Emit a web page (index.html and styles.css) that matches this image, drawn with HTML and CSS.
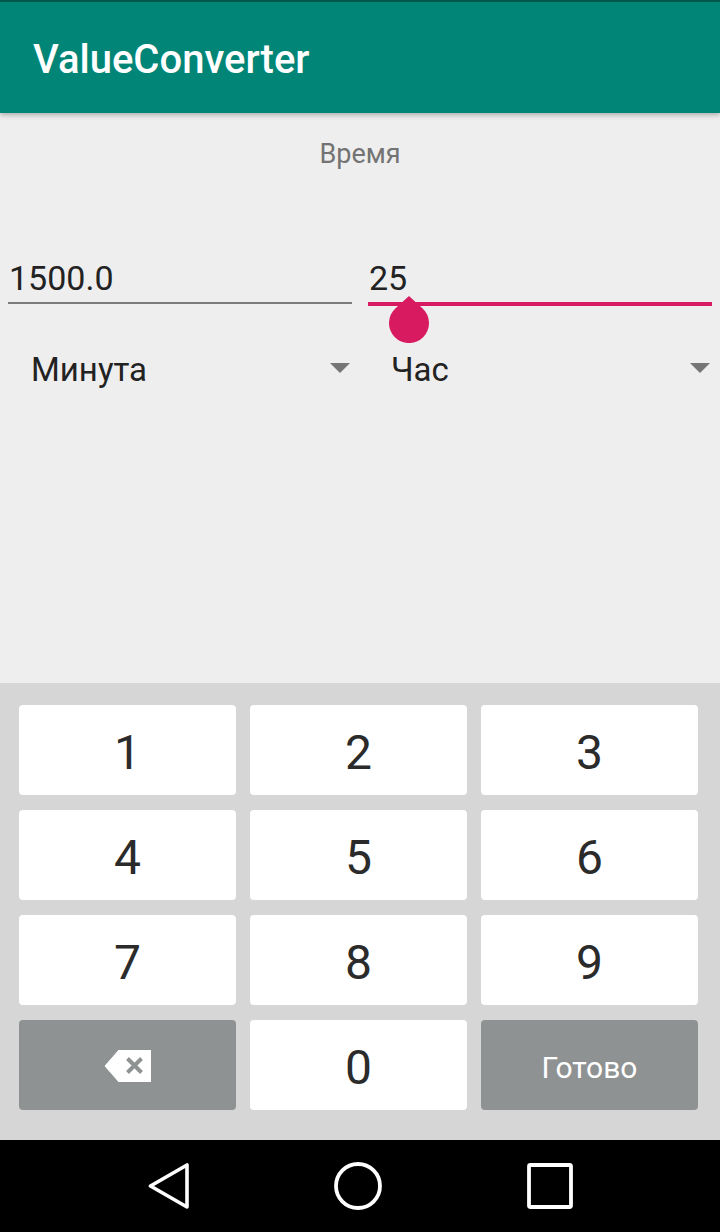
FILE: index.html
```html
<!DOCTYPE html>
<html lang="ru">
<head>
<meta charset="utf-8">
<title>ValueConverter</title>
<link rel="stylesheet" href="styles.css">
</head>
<body>
<div class="screen">
  <header class="appbar">
    <h1 class="title">ValueConverter</h1>
  </header>

  <main class="content">
    <div class="label">Время</div>
    <div class="fields">
      <div class="edit">1500.0</div>
      <div class="edit active">25
        <svg class="handle" width="40" height="47" viewBox="0 0 40 47">
          <path d="M20 0 L33.4 12.2 A20 20 0 1 1 6.6 12.2 Z" fill="#D81B60"/>
        </svg>
      </div>
    </div>
    <div class="spinners">
      <div class="spinner"><span>Минута</span><i class="arrow"></i></div>
      <div class="spinner"><span>Час</span><i class="arrow"></i></div>
    </div>
  </main>

  <section class="keyboard">
    <div class="key">1</div>
    <div class="key">2</div>
    <div class="key">3</div>
    <div class="key">4</div>
    <div class="key">5</div>
    <div class="key">6</div>
    <div class="key">7</div>
    <div class="key">8</div>
    <div class="key">9</div>
    <div class="key dark">
      <svg width="47" height="32" viewBox="0 0 47 32">
        <path d="M1 16 L15 0 H47 V32 H15 Z" fill="#fff" stroke="#fff" stroke-width="1" stroke-linejoin="round"/>
        <path d="M23.5 8.5 L37.5 22.5 M37.5 8.5 L23.5 22.5" stroke="#8f9293" stroke-width="4" stroke-linecap="butt"/>
      </svg>
    </div>
    <div class="key">0</div>
    <div class="key dark done">Готово</div>
  </section>

  <nav class="navbar">
    <svg width="41" height="46" viewBox="0 0 41 46">
      <path d="M39 2 V44 L2.5 23 Z" fill="none" stroke="#fff" stroke-width="3.6" stroke-linejoin="round"/>
    </svg>
    <svg width="48" height="48" viewBox="0 0 48 48">
      <circle cx="24" cy="24" r="22" fill="none" stroke="#fff" stroke-width="3.8"/>
    </svg>
    <svg width="46" height="46" viewBox="0 0 46 46">
      <rect x="2" y="2" width="42" height="42" rx="1.5" fill="none" stroke="#fff" stroke-width="3.8"/>
    </svg>
  </nav>
</div>
</body>
</html>
```

FILE: styles.css
```css
* { box-sizing: border-box; }

html, body {
  margin: 0;
  padding: 0;
  background: #eeeeee;
}

.screen {
  width: 720px;
  height: 1232px;
  display: flex;
  flex-direction: column;
  font-family: Roboto, "Noto Sans", sans-serif;
  overflow: hidden;
}

.appbar {
  height: 113px;
  flex: none;
  background: #008577;
  border-top: 2px solid #00574B;
  box-shadow: 0 2px 5px rgba(0, 0, 0, 0.28);
  position: relative;
  z-index: 1;
  padding: 34px 0 0 33px;
}

.title {
  margin: 0;
  font-size: 40px;
  font-weight: 500;
  line-height: 48px;
  color: #ffffff;
}

.content {
  flex: 1;
  background: #eeeeee;
  padding: 25px 8px 0 8px;
}

.label {
  font-size: 27px;
  line-height: 32px;
  color: #737373;
  text-align: center;
}

.fields {
  display: flex;
  align-items: flex-start;
  gap: 16px;
  margin-top: 88px;
}

.edit {
  flex: 1;
  position: relative;
  font-size: 34px;
  line-height: 40px;
  color: #222222;
  padding: 0 0 4px 1px;
  border-bottom: 2px solid #7b7b7b;
}

.edit.active {
  border-bottom: 4px solid #D81B60;
}

.handle {
  position: absolute;
  left: 21px;
  bottom: -41px;
}

.spinners {
  display: flex;
  gap: 16px;
  margin-top: 44px;
}

.spinner {
  flex: 1;
  display: flex;
  align-items: center;
  justify-content: space-between;
  padding: 0 2px 0 23px;
  font-size: 33px;
  line-height: 40px;
  color: #222222;
}

.arrow {
  display: block;
  width: 0;
  height: 0;
  margin-top: -4px;
  border-left: 10px solid transparent;
  border-right: 10px solid transparent;
  border-top: 10px solid #757575;
}

.keyboard {
  flex: none;
  height: 457px;
  background: #d6d6d6;
  padding: 22px 22px 0 19px;
  display: grid;
  grid-template-columns: repeat(3, 217px);
  grid-auto-rows: 90px;
  column-gap: 14px;
  row-gap: 15px;
}

.key {
  background: #ffffff;
  border-radius: 4px;
  display: flex;
  align-items: center;
  justify-content: center;
  padding-top: 4px;
  font-size: 48px;
  color: #2b2b2b;
}

.key.dark {
  background: #8f9293;
  padding-top: 2px;
}

.key.done {
  font-size: 30px;
  color: #ffffff;
  padding-top: 4px;
}

.navbar {
  flex: none;
  height: 92px;
  background: #000000;
  display: flex;
  align-items: center;
  padding-left: 148px;
  gap: 145px;
}
```
